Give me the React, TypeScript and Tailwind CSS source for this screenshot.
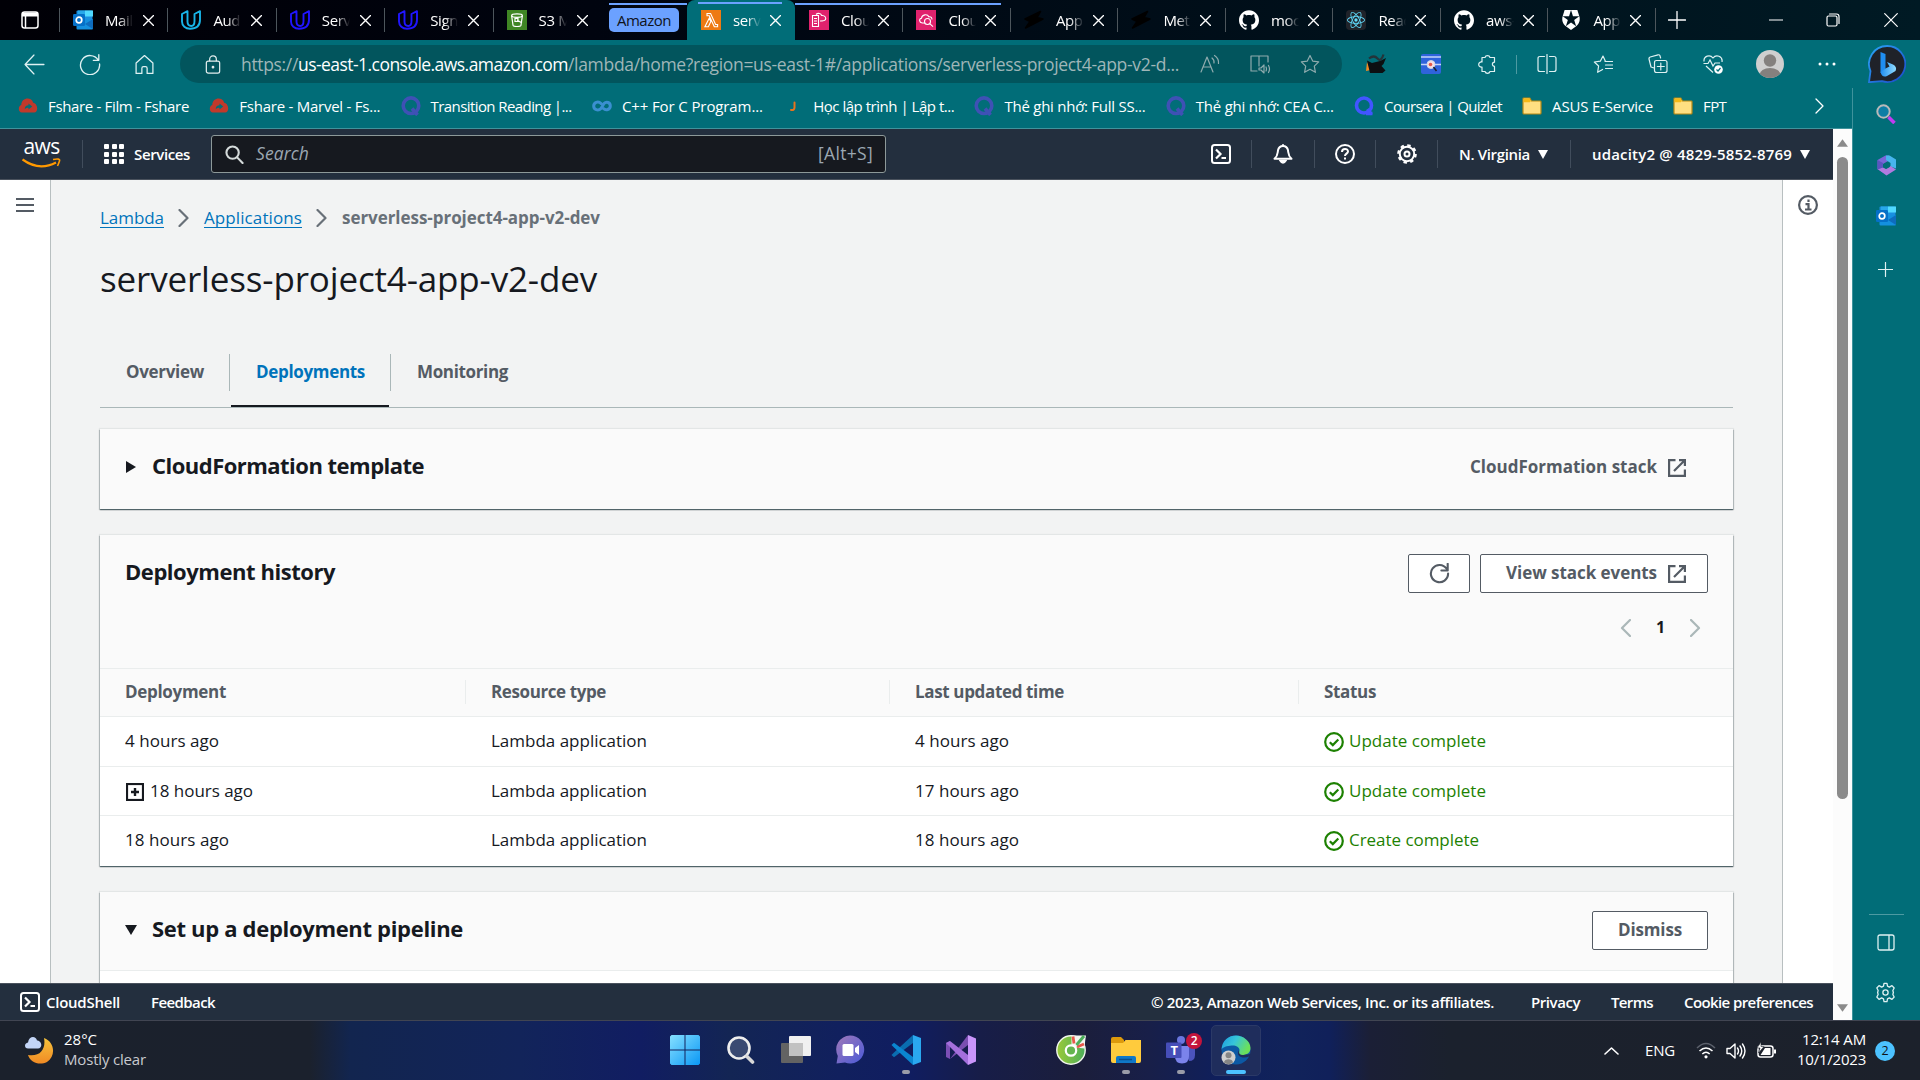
import React, { useLayoutEffect, useRef, useState } from "react";
import { SiGithub, SiReact, SiAuth0 } from "react-icons/si";

type P = { className?: string };

/* Spaces its letters so that the text fills the width given by its class. */
function Fit({ className = "", children }: { className?: string; children: string }) {
  const box = useRef<HTMLSpanElement>(null);
  const inner = useRef<HTMLSpanElement>(null);
  const [spacing, setSpacing] = useState(0);
  useLayoutEffect(() => {
    if (!box.current || !inner.current) return;
    const natural = inner.current.getBoundingClientRect().width;
    const target = box.current.getBoundingClientRect().width;
    setSpacing((target - natural) / children.length);
  }, [children]);
  return (
    <span ref={box} className={"inline-block shrink-0 whitespace-nowrap " + className}>
      <span ref={inner} style={{ letterSpacing: spacing + "px" }}>
        {children}
      </span>
    </span>
  );
}

/* ---------- icons ---------- */

const Line = ({ className = "", d, w = 1.2, vb = "0 0 20 20" }: { className?: string; d: string; w?: number; vb?: string }) => (
  <svg viewBox={vb} className={"shrink-0 " + className} fill="none" stroke="currentColor" strokeWidth={w} strokeLinecap="round" strokeLinejoin="round">
    <path d={d} />
  </svg>
);

const Udacity = ({ className = "" }: P) => (
  <Line
    className={"h-5 w-5 " + className}
    w={1.9}
    d="M6.500 1.200L1 4v7.500c0 4.500 3.500 7.300 8 7.300 6 0 10-3 10-9V1.200L13.500 4v7c0 3.200-1 5-3.200 5-2.500 0-3.800-1.600-3.800-4.500z"
  />
);

const Outlook = ({ className = "" }: P) => (
  <svg viewBox="0 0 20 20" className={"shrink-0 " + className}>
    <rect x="3.500" y="0.500" width="16" height="11" rx="1" fill="#1a8fe0" />
    <rect x="12" y="0.500" width="8" height="6" fill="#50d9ff" />
    <rect x="5" y="0.500" width="7" height="6" fill="#28a8ea" />
    <path d="M3.500 9H20v9.500a1 1 0 0 1-1 1H4.500a1 1 0 0 1-1-1z" fill="#1490df" />
    <path d="M20 9l-8 5 8 5z" fill="#0a4fa0" opacity=".55" />
    <rect x="0" y="4" width="12" height="12" rx="1.200" fill="#0570c8" />
    <circle cx="6" cy="10" r="2.800" fill="none" stroke="#fff" strokeWidth="1.700" />
  </svg>
);

const Bucket = ({ className = "" }: P) => (
  <svg viewBox="0 0 20 20" className={"shrink-0 " + className}>
    <rect width="20" height="20" fill="#3f8624" />
    <g fill="none" stroke="#fff" strokeWidth="1.200">
      <ellipse cx="10" cy="5.600" rx="5.400" ry="1.800" />
      <path d="M4.600 5.600L6 15.200c.6 1.700 7.400 1.700 8 0l1.400-9.600M8 8.500h3v3H8zM10 10l5 3" />
    </g>
  </svg>
);

const LambdaIcon = ({ className = "" }: P) => (
  <svg viewBox="0 0 20 20" className={"shrink-0 " + className}>
    <rect width="20" height="20" fill="#ee7a12" />
    <path d="M6 3.500h3.600l5 11h2v2.300h-3.300L8.300 5.800H6zM8.200 8.300l1.600 3.200-2.400 5.300H3.900z" fill="none" stroke="#fff" strokeWidth="1.100" />
  </svg>
);

const CloudPink = ({ className = "", search = false }: { className?: string; search?: boolean }) => (
  <svg viewBox="0 0 20 20" className={"shrink-0 " + className}>
    <rect width="20" height="20" fill="#e0226d" />
    <g fill="none" stroke="#fff" strokeWidth="1.100">
      {search ? (
        <>
          <path d="M9 13H6.200C3 12.600 2.800 8.700 5.500 8.200 6 4.300 11.500 3.600 12.800 6.800 15 6.300 16.200 8 15.800 9.500" />
          <circle cx="11.500" cy="11.500" r="3" />
          <path d="M13.700 13.700l3.300 3" />
        </>
      ) : (
        <>
          <path d="M3.500 5.500h6v11h-6zM5 8.500h3M5 11h3M5 13.500h3" />
          <path d="M7 4.500c2-2 5-1.200 5.600 1C16 5 17.300 8 16.500 9.500c-.7 1.500-3.500 1.500-5.500 1.500" />
        </>
      )}
    </g>
  </svg>
);

const Bolt = ({ className = "" }: P) => (
  <svg viewBox="0 0 20 20" className={"shrink-0 " + className} fill="#000" stroke="#000" strokeWidth="1.500" strokeLinejoin="round">
    <path d="M16.500 1.500L1 9l5 2.500L1.500 18 19 9l-6-1.500z" />
  </svg>
);

const QuizletQ = ({ className = "" }: P) => (
  <svg viewBox="0 0 20 20" className={"shrink-0 " + className} fill="none" stroke="currentColor" strokeWidth="3.600">
    <circle cx="10" cy="9.700" r="7.800" />
    <path d="M11 12.500l5.500 6.500" />
  </svg>
);

const QuizletNew = ({ className = "" }: P) => (
  <svg viewBox="0 0 20 20" className={"shrink-0 " + className} fill="none" stroke="#4255ff" strokeWidth="3.600">
    <circle cx="10" cy="9.500" r="7.500" />
    <path d="M12 17.500h6.500M13.500 13l4 5.500" />
  </svg>
);

const Fshare = ({ className = "" }: P) => (
  <svg viewBox="0 0 20 16" className={"shrink-0 " + className}>
    <path d="M3.500 15.500C-.5 15.500-1 8.500 2.800 7.500 3 -1 14-1.500 15.500 5c5 .5 6 10.500 1 10.500z" fill="#c0392b" />
    <path d="M6.500 12c0-3 1.500-4.200 4-4.200V5.800l4 3.300-4 3.200v-2C9 10.300 8 10.600 6.500 12z" fill="#026e78" />
  </svg>
);

const Folder = ({ className = "" }: P) => (
  <svg viewBox="0 0 20 18" className={"shrink-0 " + className}>
    <path d="M1 1.800Q1 1 1.800 1h6l1.700 3H18.200q.8 0 .8.800V16q0 1-.8 1H1.800Q1 17 1 16z" fill="#ffdf81" stroke="#b88a14" strokeWidth="1.200" />
    <path d="M1.600 1.600h6l1.200 2.600-1 1H1.600z" fill="#f5b915" />
  </svg>
);

const Shell = ({ className = "" }: P) => (
  <svg viewBox="0 0 20 20" className={"shrink-0 " + className} fill="none" stroke="#fff" strokeWidth="2">
    <rect x="1" y="1" width="18" height="18" rx="2.500" />
    <path d="M5 5.500l4.500 4.500L5 14.500M10.500 14h4.500" strokeWidth="2.200" />
  </svg>
);

const Gear = ({ className = "", w = 1.2 }: { className?: string; w?: number }) => (
  <svg viewBox="0 0 24 24" className={"shrink-0 " + className} fill="none" stroke="currentColor" strokeWidth={w} strokeLinejoin="round">
    <path d="M10.300 1.500h3.400l.6 3.300 2.100 1 3-1.700 2.500 2.700-1.500 3 .6 2.200-.6 2.200 1.500 3-2.500 2.700-3-1.700-2.100 1-.6 3.300h-3.400l-.6-3.300-2.100-1-3 1.700-2.500-2.700 1.500-3-.6-2.200.6-2.200-1.500-3 2.500-2.700 3 1.700 2.100-1z" />
    <circle cx="12" cy="12" r="3" />
  </svg>
);

const AwsGear = ({ className = "" }: P) => (
  <svg viewBox="0 0 20 20" className={"shrink-0 " + className} fill="none" stroke="#fff">
    <circle cx="10" cy="10" r="8.600" strokeWidth="2.400" strokeDasharray="3.400 3.350" />
    <circle cx="10" cy="10" r="7.200" strokeWidth="2" />
    <circle cx="10" cy="10" r="2.500" strokeWidth="2" />
  </svg>
);

const External = ({ className = "" }: P) => (
  <svg viewBox="0 0 18 18" className={"shrink-0 " + className} fill="none" stroke="#545b64" strokeWidth="2.200">
    <path d="M7.500 1.100H1.100v15.800h15.800V10.500" />
    <path d="M11 1.100h5.900V7M16.500 1.500L6 12" />
  </svg>
);

const Check = ({ className = "" }: P) => (
  <svg viewBox="0 0 20 20" className={"shrink-0 " + className} fill="none" stroke="#1d8102" strokeWidth="2.200">
    <circle cx="10" cy="10" r="8.800" />
    <path d="M5.800 10.200l3 2.900 5.500-5.600" />
  </svg>
);

const Bing = ({ className = "" }: P) => (
  <svg viewBox="0 0 38 38" className={"shrink-0 " + className}>
    <defs>
      <linearGradient id="bingRing" x1="0" y1="0" x2="1" y2="1">
        <stop offset="0" stopColor="#2aa5f5" />
        <stop offset="1" stopColor="#1b49c9" />
      </linearGradient>
      <linearGradient id="bingB" x1="0" y1="0" x2="1" y2="0">
        <stop offset="0" stopColor="#1f8df0" />
        <stop offset="1" stopColor="#8fdcff" />
      </linearGradient>
    </defs>
    <path d="M19 1a18 18 0 1 1-5 35.200L1 37.200l1.500-11A18 18 0 0 1 19 1z" fill="#1f2229" stroke="url(#bingRing)" strokeWidth="1.800" />
    <path d="M12.500 7l5 2v15l-5 4z" fill="#1f8df0" />
    <path d="M12.500 27l5-3.500 4-2-2.500-4.500 6 2.500q4.500 2.500 2.500 6.500L19 31q-5 2-6.500-4z" fill="url(#bingB)" />
  </svg>
);

const M365 = ({ className = "" }: P) => (
  <svg viewBox="0 0 20 21" className={"shrink-0 " + className}>
    <path d="M9 .5L1 5v9l5.500 3.500V9l6-3.500V.5z" fill="#7a66d8" />
    <path d="M9.500 .5H13L19.500 4.500v9l-5.500-2V8L9.500 5z" fill="#47b5ee" />
    <path d="M1 14l9 6.500 9.500-6-5.500-3.500-4.500 3-3-1.500z" fill="#b07be0" />
    <path d="M1 5v9.500l5.500-2V8z" fill="#5a55c0" />
    <path d="M10 7.500l3.300 1.700v2.800L10 13.800l-3-1.500V9z" fill="#016d78" />
  </svg>
);

/* ---------- browser chrome ---------- */

function Tab({ icon, label, wide, sep = true }: { icon: React.ReactNode; label: string; wide?: boolean; sep?: boolean }) {
  return (
    <div className={"flex h-10 shrink-0 items-center " + (wide ? "w-[108.400px]" : "w-[107.500px]")}>
      <div className={"h-6 w-px " + (sep ? "bg-[#4d565c]" : "")} />
      <div className="ml-[13px] flex w-5 justify-center">{icon}</div>
      <div className="ml-3 h-5 w-7 overflow-hidden whitespace-nowrap text-[15px] leading-5 tracking-tight text-white [mask-image:linear-gradient(to_right,black_50%,transparent)]">
        {label}
      </div>
      <Line className={"h-[11px] w-[11px] text-white " + (wide ? "ml-2.5" : "ml-[9px]")} vb="0 0 11 11" d="M0.500 0.500l10 10M10.500 0.500l-10 10" w={1.4} />
    </div>
  );
}

function TabStrip() {
  return (
    <div className="relative flex h-10 items-center bg-linear-to-r from-[#000006] via-[#000a15] to-[#001a24] text-white">
      <div className="flex w-[59px] shrink-0 pl-[21px]">
        <svg viewBox="0 0 18 18" className="h-[18px] w-[18px]" fill="none" stroke="#fff" strokeWidth="1.500">
          <rect x="1" y="1" width="16" height="16" rx="2.500" />
          <path d="M1 3.500h16" strokeWidth="4" />
          <path d="M4.500 4v13" />
        </svg>
      </div>
      <Tab wide icon={<Outlook className="h-5 w-5" />} label="Mail" />
      <Tab wide icon={<Udacity className="text-[#18b4e8]" />} label="Aud" />
      <Tab wide icon={<Udacity className="text-[#2015ff]" />} label="Serv" />
      <Tab wide icon={<Udacity className="text-[#2015ff]" />} label="Sign" />
      <Tab wide icon={<Bucket className="h-5 w-5" />} label="S3 M" />
      <div className="ml-2 flex h-6 w-[70px] shrink-0 items-center justify-center rounded-[5px] bg-[#6ba1ff]">
        <Fit className="w-[54px] text-[15px] leading-5 text-[#10131a]">Amazon</Fit>
      </div>
      <div className="ml-2 flex h-10 w-[108px] shrink-0 items-center rounded-t-lg bg-[#016d78]">
        <Tab sep={false} icon={<LambdaIcon className="h-5 w-5" />} label="serv" />
      </div>
      <Tab sep={false} icon={<CloudPink className="h-5 w-5" />} label="Clou" />
      <Tab icon={<CloudPink search className="h-5 w-5" />} label="Clou" />
      <Tab icon={<Bolt className="h-5 w-5" />} label="App" />
      <Tab icon={<Bolt className="h-5 w-5" />} label="Met" />
      <Tab icon={<SiGithub className="h-5 w-5" />} label="moc" />
      <Tab
        icon={
          <span className="flex h-5 w-5 items-center justify-center rounded-sm bg-[#20232a]">
            <SiReact className="h-[18px] w-[18px] text-[#61dafb]" />
          </span>
        }
        label="Reac"
      />
      <Tab icon={<SiGithub className="h-5 w-5" />} label="aws-" />
      <Tab icon={<SiAuth0 className="h-5 w-5" />} label="App" />
      <div className="h-6 w-px bg-[#4d565c]" />
      <Line className="ml-3 h-[18px] w-[18px]" vb="0 0 18 18" d="M9 .5v17M.5 9h17" w={1.3} />
      <div className="ml-auto flex w-[151px] shrink-0 items-center">
        <Line className="h-[14px] w-[14px]" vb="0 0 14 14" d="M.5 7h13" />
        <Line className="ml-[43px] h-[14px] w-[14px]" vb="0 0 14 14" d="M1 4.500q0-1.500 1.500-1.500h7q1.500 0 1.500 1.500v7q0 1.500-1.500 1.500h-7Q1 13 1 11.500zM3.500 1h7q2.500 0 2.500 2.500v7" />
        <Line className="ml-[44px] h-[14px] w-[14px]" vb="0 0 14 14" d="M.7.700l12.600 12.600M13.300.700L.700 13.300" />
      </div>
      <div className="absolute left-[609px] top-[3px] h-0.5 w-[78px] bg-[#6ba1ff]" />
      <div className="absolute left-[698px] top-0.5 h-0.5 w-[84px] bg-[#6ba1ff]" />
      <div className="absolute left-[795px] top-[3px] h-0.5 w-[206px] bg-[#6ba1ff]" />
    </div>
  );
}

function Toolbar() {
  return (
    <div className="flex h-[45px] items-center pt-[3px] text-[#dff1f2]">
      <Line className="ml-[24px] h-[21px] w-[21px]" d="M9.500 1L1 10l8.500 9M1 10h18" />
      <Line className="ml-[34px] h-[22px] w-[22px]" d="M17.500 6.500A8.700 8.700 0 1 0 18.700 10M18 1.500v5.200h-5" />
      <Line className="ml-[33px] h-[21px] w-[21px]" d="M2 8.500L10 1.500l8 7v10h-5.500v-5q0-1.500-1.500-1.500H9q-1.500 0-1.500 1.500v5H2z" />
      <div className="ml-[25px] flex h-[38px] w-[1162px] shrink-0 items-center rounded-full bg-[#02555d]">
        <svg viewBox="0 0 16 20" className="ml-[25px] h-[19px] w-4 text-[#e3eeee]" fill="none" stroke="currentColor" strokeWidth="1.300">
          <rect x="1" y="6.500" width="14" height="12.500" rx="2" />
          <path d="M4.500 6.500V4.500a3.500 3.500 0 0 1 7 0v2" />
          <circle cx="8" cy="12.800" r=".8" fill="currentColor" />
        </svg>
        <div className="ml-[20px] flex text-[17.500px] leading-6 text-[#9fb6b8]">
          <Fit className="w-[57px]">https://</Fit>
          <Fit className="w-[270px] text-white">us-east-1.console.aws.amazon.com</Fit>
          <Fit className="w-[611px]">/lambda/home?region=us-east-1#/applications/serverless-project4-app-v2-d...</Fit>
        </div>
        <Line className="ml-[21px] h-5 w-5 text-[#8fabae]" d="M1 18L7 3l6 15M3 13h8M12 4q2.500 2 2 5M14.500 1.500q4.500 3 4 8" />
        <Line className="ml-[29px] h-5 w-[22px] text-[#8fabae]" vb="0 0 22 20" d="M10 2H2v15h6M10 2v10M10 2h9v6M10 14h2l3-3v8l-3-3h-2zM17 13q1 2 0 4M19.500 11.500q2 3.500 0 7" />
        <Line className="ml-[29px] h-5 w-5 text-[#8fabae]" d="M10 1.500l2.700 5.600 6 .8-4.400 4.200 1.100 6.200L10 15.300l-5.400 3 1.100-6.200L1.300 7.900l6-.8z" />
      </div>
      <svg viewBox="0 0 20 20" className="ml-6 h-5 w-5 shrink-0">
        <path d="M1 8l-1 9 5-1z" fill="#f08a24" />
        <path d="M1 6.500l5 2.500 8-2 6-3-2.500 6-2 2 4 4.500-3 2.500H4z" fill="#0c0f12" />
        <path d="M3 4.500q5-4 8.500 0t6-4" stroke="#24343a" strokeWidth="2.200" fill="none" />
      </svg>
      <svg viewBox="0 0 20 20" className="ml-[35px] h-5 w-5 shrink-0">
        <rect width="20" height="20" rx="2" fill="#2f63dc" />
        <path d="M0 3h20M0 10.500h20" stroke="#c4d4fa" strokeWidth="1.300" />
        <circle cx="10" cy="10.500" r="4" fill="#f5dfe4" stroke="#cfd6e8" />
        <circle cx="9.500" cy="10.500" r="1.800" fill="#e4564a" />
        <path d="M12.500 13l3 4" stroke="#1b2230" strokeWidth="1.600" />
      </svg>
      <Line className="ml-9 h-5 w-5" d="M5 3.500h3a2.600 2.600 0 0 1 5 0h4.500v4.700a2.100 2.100 0 0 0 0 4.200V17.500H13a2.600 2.600 0 0 1-5 0H5V13a2.600 2.600 0 1 1 0-5z" />
      <div className="ml-[19px] h-[19px] w-px bg-[#4d9aa2]" />
      <Line className="ml-[20px] h-5 w-5" d="M7.500 2.500H3Q1 2.500 1 4.500v11q0 2 2 2h4.500M12.500 2.500H17q2 0 2 2v11q0 2-2 2h-4.500M10 .5v19" />
      <Line className="ml-[36px] h-5 w-5" d="M12.500 7.500L10 2 7.300 7.200l-6 .8 4.300 4-1 6.300 5-2.800M12 7.500h7.500M12.500 11h7M12.500 14.500h7" />
      <Line className="ml-[35px] h-5 w-5" d="M6 14L3 13 1 5Q.7 3.500 2.200 3L10 .8q1.500-.3 2 1l.6 2.200M8.500 6.500h8.500q2 0 2 2v8q0 2-2 2H8.500q-2 0-2-2v-8q0-2 2-2zM12.800 9v7M9.300 12.500h7" />
      <svg viewBox="0 0 20 20" className="ml-[35px] h-5 w-5 shrink-0" fill="none" stroke="currentColor" strokeWidth="1.200">
        <path d="M1 7.500C.5 2 7 0 10 4c3-4 10-2 9 4M.5 9.500h4.500l2-3.500 3 6 2-3h5M3 12l7 6.500" />
        <circle cx="15.500" cy="15.500" r="4.300" fill="#fff" stroke="none" />
        <path d="M13.500 15.500l1.500 1.500 2.500-3" stroke="#016d78" />
      </svg>
      <svg viewBox="0 0 28 28" className="ml-[33px] h-7 w-7 shrink-0">
        <defs>
          <clipPath id="avatar">
            <circle cx="14" cy="14" r="14" />
          </clipPath>
        </defs>
        <g clipPath="url(#avatar)">
          <rect width="28" height="28" fill="#cfcfcf" />
          <circle cx="14" cy="10.500" r="6.200" fill="#84807e" />
          <ellipse cx="14" cy="25" rx="10.500" ry="7" fill="#84807e" />
        </g>
      </svg>
      <svg viewBox="0 0 18 4" className="ml-[34px] h-1 w-[18px] shrink-0" fill="#fff">
        <circle cx="2" cy="2" r="1.500" />
        <circle cx="9" cy="2" r="1.500" />
        <circle cx="16" cy="2" r="1.500" />
      </svg>
    </div>
  );
}

function Bookmark({ icon, children }: { icon: React.ReactNode; children: React.ReactNode }) {
  return (
    <div className="flex w-[191.300px] shrink-0 items-center">
      <div className="mr-2.5 flex w-5 justify-center">{icon}</div>
      {children}
    </div>
  );
}

function Bookmarks() {
  return (
    <div className="flex h-[43px] items-center border-b border-[#3f939c] pb-[3px] pl-[18px] text-[15px] leading-5 text-white">
      <Bookmark icon={<Fshare className="h-[15px] w-5" />}><Fit className="w-[141px]">Fshare - Film - Fshare</Fit></Bookmark>
      <Bookmark icon={<Fshare className="h-[15px] w-5" />}><Fit className="w-[141px]">Fshare - Marvel - Fs...</Fit></Bookmark>
      <Bookmark icon={<QuizletQ className="h-5 w-5 text-[#3f51b5]" />}><Fit className="w-[141px]">Transition Reading |...</Fit></Bookmark>
      <Bookmark icon={<Line className="h-5 w-5 text-[#3a8fd0]" w={3} d="M9 7.500C6 4.500 1.700 6.500 1.700 10S6 15.500 9 12.500L12 7.500C14.500 5 18.300 6.500 18.300 10s-4.500 5-6.800 2.500" />}><Fit className="w-[141px]">C++ For C Program...</Fit></Bookmark>
      <Bookmark icon={<Line className="h-5 w-5 text-[#e8731c]" w={2} d="M11.500 6.500v5q0 3-3.500 2.500" />}><Fit className="w-[141px]">Học lập trình | Lập t...</Fit></Bookmark>
      <Bookmark icon={<QuizletQ className="h-5 w-5 text-[#3f51b5]" />}><Fit className="w-[141px]">Thẻ ghi nhớ: Full SS...</Fit></Bookmark>
      <Bookmark icon={<QuizletQ className="h-5 w-5 text-[#3f51b5]" />}><Fit className="w-[138px]">Thẻ ghi nhớ: CEA C...</Fit></Bookmark>
      <QuizletNew className="-ml-[3px] mr-2.5 h-5 w-5" />
      <Fit className="w-[118px]">Coursera | Quizlet</Fit>
      <Folder className="ml-5 mr-2.5 h-[18px] w-5" />
      <Fit className="w-[101px]">ASUS E-Service</Fit>
      <Folder className="ml-5 mr-2.5 h-[18px] w-5" />
      <Fit className="w-[23px]">FPT</Fit>
      <Line className="ml-auto mr-7 h-4 w-[9px]" vb="0 0 9 16" d="M1 1l7 7-7 7" w={1.3} />
    </div>
  );
}

/* ---------- AWS console ---------- */

const Divider = () => <div className="h-7 w-px shrink-0 bg-[#414d5c]" />;

const Caret = ({ className = "" }: P) => (
  <svg viewBox="0 0 10 9" className={"h-[9px] w-[10px] shrink-0 " + className} fill="#fff">
    <path d="M0 0h10L5 9z" />
  </svg>
);

function AwsHeader() {
  return (
    <div className="flex h-[51px] shrink-0 items-center border-b border-[#4a525d] bg-[#232f3e] text-[15px] font-semibold text-white">
      <div className="ml-[22px] flex w-[39px] shrink-0 flex-col items-center">
        <Fit className="-mt-px w-[36px] text-[21px] font-medium leading-[15px]">aws</Fit>
        <svg viewBox="0 0 39 11" className="mt-1 h-[11px] w-[39px]" fill="none" stroke="#ff9900" strokeWidth="2.200">
          <path d="M0.500 1.500Q17 13.500 34 4.500" />
          <path d="M31 1.500q7.500-1.500 6.500 1.500t-2 5" strokeWidth="1.600" />
        </svg>
      </div>
      <div className="ml-[21px]"><Divider /></div>
      <div className="ml-[21px] grid h-5 w-5 shrink-0 grid-cols-3 gap-[2.500px]">
        {Array.from({ length: 9 }, (_, i) => (
          <span key={i} className="rounded-[1px] bg-white" />
        ))}
      </div>
      <Fit className="ml-2.5 w-[56px] leading-5">Services</Fit>
      <div className="ml-[21px] flex h-[38px] w-[675px] shrink-0 items-center rounded-[3px] border border-[#8d9999] bg-[#16191f] font-normal text-[#9ba7b2]">
        <Line className="ml-[13px] h-[19px] w-[19px] text-[#d5dbdb]" w={2.2} d="M8 1.500a6.500 6.500 0 1 0 0 13a6.500 6.500 0 1 0 0-13M12.800 13l5.700 6" />
        <Fit className="-mt-0.5 ml-3 w-[53px] text-[17.500px] italic leading-6">Search</Fit>
        <Fit className="-mt-0.5 ml-auto mr-3 w-[55px] text-[17.500px] leading-6">[Alt+S]</Fit>
      </div>
      <Shell className="ml-[325px] h-5 w-5" />
      <div className="ml-5"><Divider /></div>
      <svg viewBox="0 0 20 20" className="ml-[21px] h-5 w-5 shrink-0" fill="none" stroke="#fff" strokeWidth="2">
        <path d="M1.500 14.800c3.500-3 3-5.500 3.500-8.500C5.800 2.800 8 2 10 2s4.200.8 5 4.300c.5 3 0 5.500 3.500 8.500z" strokeLinejoin="round" />
        <path d="M10 0v2M7 16.500q3 5 6 0z" fill="#fff" strokeWidth="1.500" />
      </svg>
      <div className="ml-[21px]"><Divider /></div>
      <svg viewBox="0 0 20 20" className="ml-5 h-5 w-5 shrink-0" fill="none" stroke="#fff" strokeWidth="2">
        <circle cx="10" cy="10" r="9" />
        <path d="M7 8c0-4 6-4 6-.5 0 2-3 2.300-3 4.500M10 13.500v2" />
      </svg>
      <div className="ml-5"><Divider /></div>
      <AwsGear className="ml-[21px] h-5 w-5" />
      <div className="ml-5"><Divider /></div>
      <Fit className="ml-[21px] w-[71px] leading-5">N. Virginia</Fit>
      <Caret className="ml-2" />
      <div className="ml-[22px]"><Divider /></div>
      <Fit className="ml-[21px] w-[200px] leading-5">udacity2 @ 4829-5852-8769</Fit>
      <Caret className="ml-2" />
    </div>
  );
}

const Card = ({ className = "", children }: { className?: string; children: React.ReactNode }) => (
  <section className={"shrink-0 bg-[#fafafa] shadow-[0_0_1px_1px_rgba(0,28,36,0.06),0_1px_1px_0_rgba(0,28,36,0.5),1px_1px_1px_0_rgba(0,28,36,0.15),-1px_1px_1px_0_rgba(0,28,36,0.15)] " + className}>
    {children}
  </section>
);

const Button = ({ className = "", children }: { className?: string; children: React.ReactNode }) => (
  <button className={"flex h-[39px] shrink-0 items-center justify-center rounded-[2px] border border-[#545b64] bg-white text-[17px] font-bold leading-6 text-[#545b64] " + className}>
    {children}
  </button>
);

type Row = { age: React.ReactNode; updated: React.ReactNode; status: React.ReactNode };

const rows: Row[] = [
  {
    age: <Fit className="w-[94px]">4 hours ago</Fit>,
    updated: <Fit className="w-[94px]">4 hours ago</Fit>,
    status: <Fit className="w-[137px]">Update complete</Fit>,
  },
  {
    age: (
      <>
        <svg viewBox="0 0 18 18" className="ml-px mr-1.5 mt-0.5 h-[18px] w-[18px]" fill="none" stroke="#16191f">
          <rect x="1" y="1" width="16" height="16" strokeWidth="2.200" />
          <path d="M9 5v8M5 9h8" strokeWidth="2.400" />
        </svg>
        <Fit className="w-[103px]">18 hours ago</Fit>
      </>
    ),
    updated: <Fit className="w-[104px]">17 hours ago</Fit>,
    status: <Fit className="w-[137px]">Update complete</Fit>,
  },
  {
    age: <Fit className="w-[104px]">18 hours ago</Fit>,
    updated: <Fit className="w-[104px]">18 hours ago</Fit>,
    status: <Fit className="w-[130px]">Create complete</Fit>,
  },
];

const columns = "grid grid-cols-[365px_425px_408px_1fr] items-center pl-[25px]";

function Main() {
  return (
    <div className="flex h-[803px] shrink-0 overflow-hidden">
      <nav className="w-[51px] shrink-0 border-r border-[#b8bfc0] bg-white pl-4 pt-[18px]">
        <div className="flex flex-col gap-1">
          <span className="h-0.5 w-[18px] bg-[#545b64]" />
          <span className="h-0.5 w-[18px] bg-[#545b64]" />
          <span className="h-0.5 w-[18px] bg-[#545b64]" />
        </div>
      </nav>
      <main className="flex w-[1731px] shrink-0 flex-col bg-[#f2f3f3] pl-[49px] pr-[49px] text-[17px] leading-6 text-[#16191f]">
        <div className="mt-[26px] flex h-6 shrink-0 items-center">
          <Fit className="w-16 border-b border-[#0073bb] leading-[19px] text-[#0073bb]">Lambda</Fit>
          <Line className="ml-[14px] h-[18px] w-[11px] text-[#687078]" vb="0 0 11 18" w={2.2} d="M1.500 1l8 8-8 8" />
          <Fit className="ml-[15px] w-[98px] border-b border-[#0073bb] leading-[19px] text-[#0073bb]">Applications</Fit>
          <Line className="ml-[14px] h-[18px] w-[11px] text-[#687078]" vb="0 0 11 18" w={2.2} d="M1.500 1l8 8-8 8" />
          <Fit className="ml-[15px] w-[258px] font-bold text-[#687078]">serverless-project4-app-v2-dev</Fit>
        </div>
        <h1 className="mt-[27px] h-11 shrink-0 text-[35px] leading-[44px]">
          <Fit className="w-[497px]">serverless-project4-app-v2-dev</Fit>
        </h1>
        <div className="mt-[53px] flex h-[54px] shrink-0 border-b border-[#aab7b8] font-bold leading-[35px] text-[#545b64]">
          <Fit className="ml-[26px] w-[78px]">Overview</Fit>
          <div className="ml-[25px] h-[37px] w-px bg-[#aab7b8]" />
          <div className="ml-px flex h-[53px] w-[158px] border-b-2 border-[#16191f] pl-[25px]">
            <Fit className="w-[109px] text-[#0073bb]">Deployments</Fit>
          </div>
          <div className="ml-px h-[37px] w-px bg-[#aab7b8]" />
          <Fit className="ml-[26px] w-[91px]">Monitoring</Fit>
        </div>

        <Card className="mt-[21px] flex h-[80px] items-center pb-[5px] pl-[26px] pr-[47px] font-bold">
          <svg viewBox="0 0 10 12" className="h-3 w-[10px]" fill="#16191f"><path d="M0 0l10 6-10 6z" /></svg>
          <h2 className="-mt-[3px] ml-4 text-[22px]"><Fit className="w-[272px]">CloudFormation template</Fit></h2>
          <Fit className="ml-auto w-[187px] text-[#545b64]">CloudFormation stack</Fit>
          <External className="ml-[11px] mt-0.5 h-[18px] w-[18px]" />
        </Card>

        <Card className="mt-[26px] h-[331px]">
          <div className="flex h-[133px] flex-col pl-[25px] pr-[25px] pt-[19px]">
            <div className="flex items-center">
              <h2 className="-mt-[5px] text-[22px] font-bold"><Fit className="w-[210px]">Deployment history</Fit></h2>
              <Button className="ml-auto w-[62px]">
                <Line className="h-[21px] w-[21px]" w={2} d="M16.800 5.500A8.200 8.200 0 1 0 18.200 10M17.800 0.800v6.400h-6" />
              </Button>
              <Button className="ml-2.5 w-[228px] pl-1">
                <Fit className="-mt-0.5 w-[151px]">View stack events</Fit>
                <External className="ml-[11px] h-[18px] w-[18px]" />
              </Button>
            </div>
            <div className="mt-6 flex items-center justify-end pr-[7px]">
              <Line className="h-[18px] w-[11px] text-[#aab7b8]" vb="0 0 11 18" w={2.2} d="M10 1L2 9l8 8" />
              <span className="-mt-0.5 w-[59px] text-center text-[16px] font-bold">1</span>
              <Line className="h-[18px] w-[11px] text-[#aab7b8]" vb="0 0 11 18" w={2.2} d="M1 1l8 8-8 8" />
            </div>
          </div>
          <div className={"h-[49px] border-y border-[#eaeded] pb-0.5 font-bold text-[#545b64] " + columns}>
            <Fit className="w-[101px]">Deployment</Fit>
            <div className="-ml-[25px] border-l border-[#eaeded] pl-[25px]"><Fit className="w-[115px]">Resource type</Fit></div>
            <div className="-ml-[26px] border-l border-[#eaeded] pl-[25px]"><Fit className="w-[149px]">Last updated time</Fit></div>
            <div className="-ml-[25px] border-l border-[#eaeded] pl-[25px]"><Fit className="w-[52px]">Status</Fit></div>
          </div>
          {rows.map((r, i) => (
            <div key={i} className={"h-[49.500px] border-b border-[#eaeded] bg-white last:h-[50px] last:border-b-0 last:pb-0.5 " + columns}>
              <div className="flex items-center">{r.age}</div>
              <Fit className="ml-px w-[156px]">Lambda application</Fit>
              <div className="flex">{r.updated}</div>
              <div className="flex items-center pl-px text-[#1d8102]">
                <Check className="mr-[5px] mt-0.5 h-5 w-5" />
                {r.status}
              </div>
            </div>
          ))}
        </Card>

        <Card className="mt-[26px] h-[200px]">
          <div className="flex h-[79px] items-center border-b border-[#eaeded] pb-0.5 pl-[25px] pr-[25px]">
            <svg viewBox="0 0 12 10" className="h-[10px] w-[12px]" fill="#16191f"><path d="M0 0h12L6 10z" /></svg>
            <h2 className="-mt-1 ml-[15px] text-[22px] font-bold"><Fit className="w-[311px]">Set up a deployment pipeline</Fit></h2>
            <Button className="ml-auto w-[116px]"><Fit className="w-[64px]">Dismiss</Fit></Button>
          </div>
          <div className="h-[120px] bg-white" />
        </Card>
      </main>
      <aside className="flex-1 border-l border-[#b8bfc0] bg-white pl-[15px] pt-[15px]">
        <svg viewBox="0 0 20 20" className="h-5 w-5" fill="none" stroke="#545b64" strokeWidth="2.200">
          <circle cx="10" cy="10" r="8.900" />
          <path d="M10.500 4.500v2.500M7.500 9.200h3v5M7 14.500h6.500" />
        </svg>
      </aside>
    </div>
  );
}

function Footer() {
  return (
    <div className="flex h-[37px] shrink-0 items-center border-t border-[#4a525d] bg-[#232f3e] text-[15px] font-semibold leading-5 text-white">
      <Shell className="ml-5 h-5 w-5" />
      <Fit className="ml-1.5 w-[74px]">CloudShell</Fit>
      <Fit className="ml-[31px] w-16">Feedback</Fit>
      <Fit className="ml-auto w-[343px]">© 2023, Amazon Web Services, Inc. or its affiliates.</Fit>
      <Fit className="ml-[37px] w-[49px]">Privacy</Fit>
      <Fit className="ml-[31px] w-[42px]">Terms</Fit>
      <Fit className="ml-[31px] mr-5 w-[129px]">Cookie preferences</Fit>
    </div>
  );
}

function Scrollbar() {
  return (
    <div className="flex w-[19px] shrink-0 flex-col items-center bg-[#fcfcfc] pt-2.5">
      <svg viewBox="0 0 12 8" className="h-2 w-[11px]" fill="#8b8b8b"><path d="M6 0l6 8H0z" /></svg>
      <div className="mt-2.5 h-[642px] w-[11px] rounded-full bg-[#8b8b8b]" />
      <svg viewBox="0 0 12 8" className="mb-2 mt-auto h-2 w-[11px]" fill="#8b8b8b"><path d="M6 8l6-8H0z" /></svg>
    </div>
  );
}

function EdgeSidebar() {
  return (
    <div className="flex w-[68px] shrink-0 flex-col items-center text-[#dff1f2]">
      <Bing className="ml-[2px] mt-[5px] h-[38px] w-[38px]" />
      <div className="mt-[5px] flex w-full flex-1 flex-col items-center border-l border-[#3f939c] pr-[2px] pt-[16px]">
        <svg viewBox="0 0 20 20" className="h-5 w-5">
          <path d="M12.500 13l6 6" stroke="#c03cf0" strokeWidth="3.600" />
          <circle cx="7.500" cy="7.500" r="6.200" fill="#0d7ea5" stroke="#b9b9b9" strokeWidth="2" />
        </svg>
        <M365 className="ml-px mt-[31px] h-[21px] w-[21px]" />
        <Outlook className="ml-px mt-[30px] h-5 w-5" />
        <Line className="mt-[36px] h-[15px] w-[15px]" vb="0 0 15 15" d="M7.500 .5v14M.5 7.500h14" w={1.2} />
        <div className="ml-px mt-auto h-px w-[35px] bg-[#4d9aa2]" />
        <Line className="mt-[19px] h-[17px] w-[18px]" vb="0 0 18 17" d="M3 1h12q2 0 2 2v11q0 2-2 2H3q-2 0-2-2V3q0-2 2-2zM12 1v15" w={1.3} />
        <Gear className="mb-[17px] mt-[31px] h-[21px] w-[21px]" w={1.5} />
      </div>
    </div>
  );
}

/* ---------- Windows taskbar ---------- */

function TaskbarApp({ dot, children }: { dot?: boolean; children?: React.ReactNode }) {
  return (
    <div className="flex h-[59px] w-[55.140px] shrink-0 flex-col items-center pt-3.5">
      <div className="h-[31px]">{children}</div>
      {dot && <div className="mt-1 h-1 w-2 rounded-full bg-[#9a9ca8]" />}
    </div>
  );
}

function Taskbar() {
  return (
    <div className="flex h-[60px] items-center border-t border-[#414552] bg-[linear-gradient(to_right,#1b212c_0px,#1b212d_310px,#12254f_350px,#12245a_520px,#111d62_640px,#132554_730px,#11205e_840px,#101d60_910px,#171d48_980px,#1b1e3b_1080px,#181f49_1150px,#0f1f5c_1220px,#11235a_1290px,#10205a_1330px,#1b1f36_1370px,#1b212d_1450px,#1c212b_1920px)] text-[15px] leading-5 text-white">
      <svg viewBox="0 0 30 28" className="-mt-px ml-[24px] h-7 w-[30px] shrink-0">
        <defs>
          <linearGradient id="moon" x1="0" y1="0" x2="0" y2="1">
            <stop offset="0" stopColor="#f6c33c" />
            <stop offset="1" stopColor="#f08a24" />
          </linearGradient>
        </defs>
        <path d="M20 2C31 6 32 20 23 26 15 30 6 26 4 19c13 2 18-7 16-17z" fill="url(#moon)" />
        <path d="M4 12.500C0 12.500 0 7 4 6.500 5-.5 12-.5 13 4.500c5 0 6 8 1 8z" fill="#c3d5f7" />
      </svg>
      <div className="-mt-1 ml-2.5 flex w-[583px] shrink-0 flex-col">
        <Fit className="w-[33px]">28°C</Fit>
        <Fit className="w-[82px] text-[#c9cacf]">Mostly clear</Fit>
      </div>
      <div className="ml-[10.500px] flex">
        <TaskbarApp>
          <svg viewBox="0 0 30 30" className="h-[30px] w-[30px]">
            <defs>
              <linearGradient id="win" gradientUnits="userSpaceOnUse" x1="0" y1="0" x2="30" y2="30">
                <stop offset="0" stopColor="#86e0ff" />
                <stop offset="1" stopColor="#0a97f5" />
              </linearGradient>
            </defs>
            <path d="M1.500 0h13v14.500H0V1.500zM15.500 0h13l1.500 1.500v13H15.500zM0 15.500h14.500V30h-13L0 28.500zM15.500 15.500H30v13L28.500 30h-13z" fill="url(#win)" />
          </svg>
        </TaskbarApp>
        <TaskbarApp>
          <svg viewBox="0 0 28 30" className="ml-px h-[30px] w-7" fill="none">
            <circle cx="12" cy="13" r="10.500" fill="#3a4a72" stroke="#eee" strokeWidth="2.600" />
            <path d="M20 21.500l5.500 5.500" stroke="#d8d8d8" strokeWidth="3.600" strokeLinecap="round" />
          </svg>
        </TaskbarApp>
        <TaskbarApp>
          <svg viewBox="0 0 30 30" className="ml-px h-[30px] w-[30px]">
            <rect x="0" y="8" width="22" height="20" rx="1" fill="#636363" />
            <rect x="8" y="1" width="22" height="20" rx="1" fill="#f0f0f0" />
            <rect x="8" y="8" width="14" height="13" fill="#c2c2c2" />
          </svg>
        </TaskbarApp>
        <TaskbarApp>
          <svg viewBox="0 0 30 30" className="h-[30px] w-[30px]">
            <defs>
              <linearGradient id="chat" x1="0" y1="0" x2="1" y2="1">
                <stop offset="0" stopColor="#a078b8" />
                <stop offset="1" stopColor="#4a5ad8" />
              </linearGradient>
            </defs>
            <path d="M15 .5a14 14 0 1 1-5 27L1.500 28.500 2.800 21A14 14 0 0 1 15 .5z" fill="url(#chat)" />
            <rect x="7.500" y="9" width="11" height="12" rx="1.500" fill="#fff" />
            <path d="M20 13l4-3v10l-4-3z" fill="#fff" />
          </svg>
        </TaskbarApp>
        <TaskbarApp dot>
          <svg viewBox="0 0 30 30" className="h-[30px] w-[30px]">
            <path d="M22 0L3 17.500.5 20 3 22.200 22 8z" fill="#0a6db0" />
            <path d="M22 30L3 12.500.5 10 3 7.800 22 22z" fill="#0a85d0" />
            <path d="M22 0l8 3v24l-8 3z" fill="#2aa8f0" />
          </svg>
        </TaskbarApp>
        <TaskbarApp>
          <svg viewBox="0 0 30 30" className="h-[30px] w-[30px]">
            <path d="M0 8l4-2v18l-4-2z" fill="#7b4fb5" />
            <path d="M4 24L22 0v10L4 24z" fill="#7a4fb0" />
            <path d="M4 6l18 14v10L0 8z" fill="#a46fdc" />
            <path d="M22 0l8 3.500v23L22 30z" fill="#c995fa" />
          </svg>
        </TaskbarApp>
        <TaskbarApp />
        <TaskbarApp>
          <svg viewBox="0 0 30 30" className="ml-px h-[30px] w-[30px]">
            <defs>
              <linearGradient id="coc" x1="0" y1="0" x2="1" y2="0">
                <stop offset="0" stopColor="#9ac93a" />
                <stop offset="1" stopColor="#4caf5a" />
              </linearGradient>
            </defs>
            <circle cx="15" cy="15" r="14.200" fill="url(#coc)" stroke="#f2f7ee" strokeWidth="1.400" />
            <path d="M15.500 0.500H30q-1 5-1.500 13l-9-1-4-2z" fill="#f4f6f0" />
            <path d="M17 1.500l1 7M28 9l-7 3" stroke="#e8584a" strokeWidth="2.800" />
            <path d="M28 1l-7.500 9" stroke="#4caf5a" strokeWidth="3" />
            <circle cx="15" cy="15.500" r="5.200" fill="#64b550" stroke="#fff" strokeWidth="2.200" />
          </svg>
        </TaskbarApp>
        <TaskbarApp dot>
          <svg viewBox="0 0 30 30" className="h-[30px] w-[30px]">
            <path d="M0 4q0-2 2-2h8l3 3v5H0z" fill="#dd9a0c" />
            <path d="M0 8h12l2.500-3H30v21q0 2-2 2H2q-2 0-2-2z" fill="#ffcb3d" />
            <path d="M5 28v-5q0-2 2-2h16q2 0 2 2v5z" fill="#0f78c8" />
            <path d="M8 24.500h13" stroke="#0a4f8c" strokeWidth="1.500" />
          </svg>
        </TaskbarApp>
        <TaskbarApp dot>
          <div className="relative">
            <svg viewBox="0 0 30 30" className="h-[30px] w-[30px]">
              <circle cx="15" cy="5" r="4" fill="#6a76de" />
              <path d="M18 11h11v9q0 6-6 6z" fill="#4b53bc" />
              <path d="M9 11h14v10q0 7.500-7 7.500T9 21z" fill="#7b83eb" />
              <rect x="0" y="7.500" width="15.500" height="15.500" rx="1" fill="#464eb8" />
            </svg>
            <span className="absolute left-0 top-[7px] w-4 text-center text-[13px] font-bold leading-4">T</span>
            <span className="absolute -top-0.5 left-5 flex h-4 w-4 items-center justify-center rounded-full bg-[#c4143c] text-[12px] font-semibold leading-4">2</span>
          </div>
        </TaskbarApp>
        <div className="flex h-[59px] w-[55.140px] justify-center pt-1">
          <div className="flex h-[51px] w-[50px] flex-col items-center rounded-[5px] border border-[#2b3967] bg-[#1f2d5c] pt-[9px]">
            <svg viewBox="0 0 30 30" className="h-[30px] w-[30px]">
              <defs>
                <linearGradient id="edge" x1="0" y1="0" x2="1" y2=".4">
                  <stop offset="0" stopColor="#1c9ade" />
                  <stop offset=".5" stopColor="#36c5da" />
                  <stop offset="1" stopColor="#6be05a" />
                </linearGradient>
              </defs>
              <circle cx="15" cy="15" r="14.500" fill="#0c59a4" />
              <path d="M.5 15C1 5 8 .5 15 .5S29.500 6 29.500 13c0 5-4 7-8 7-5 0-3-2-3-5 0-3-4-5-8-4.500S1 12 .5 15z" fill="url(#edge)" />
              <path d="M18 15c-4 6 4 9.500 10 6.500L30 24V19l-8 1q-5 0-4-5z" fill="#1f2d5c" />
              <circle cx="7.500" cy="22.500" r="7" fill="#cfcfcf" />
              <circle cx="7.500" cy="20.300" r="3" fill="#858585" />
              <path d="M3 27.500c0-4.500 9-4.500 9 0q-4.500 3.500-9 0z" fill="#858585" />
            </svg>
            <div className="mt-[5px] h-1 w-5 rounded-full bg-[#4cc2ff]" />
          </div>
        </div>
      </div>
      <Line className="ml-auto h-2 w-[15px]" vb="0 0 15 8" d="M1 7l6.500-6L14 7" w={1.6} />
      <Fit className="-mt-0.5 ml-[26px] w-[30px]">ENG</Fit>
      <svg viewBox="0 0 20 18" className="ml-[21px] h-[18px] w-5 shrink-0" fill="none" stroke="#fff" strokeWidth="1.500">
        <path d="M1 6q9-9 18 0" stroke="#5b606b" />
        <path d="M3.500 9q6.500-6 13 0M6.300 12q3.700-3.500 7.400 0" />
        <circle cx="10" cy="14.800" r="1.600" fill="#fff" stroke="none" />
      </svg>
      <Line className="ml-2.5 h-[18px] w-5" vb="0 0 20 18" w={1.4} d="M1 6.500h3L9 2v14l-5-4.500H1zM11.500 6q2 3 0 6M14 4q3.500 5 0 10M16.500 2q5 7 0 14" />
      <svg viewBox="0 0 20 18" className="ml-2.5 h-[18px] w-5 shrink-0">
        <rect x="2" y="4" width="15" height="11" rx="2.500" fill="none" stroke="#fff" strokeWidth="1.500" />
        <path d="M18 7.500h2v4h-2zM9 6h5.500v7H4.500z" fill="#fff" />
        <path d="M5 0L1 6h3L2.500 11 8 4.500H5z" fill="#fff" stroke="#1c212b" strokeWidth=".6" />
      </svg>
      <div className="-mt-1 ml-[21px] flex w-[69px] shrink-0 flex-col items-end">
        <Fit className="w-[64px]">12:14 AM</Fit>
        <Fit className="w-[69px]">10/1/2023</Fit>
      </div>
      <span className="ml-[9px] mr-[25px] flex h-5 w-5 shrink-0 items-center justify-center rounded-full bg-[#4cc2ff] text-[12.500px] text-[#10131a]">2</span>
    </div>
  );
}

export default function App() {
  return (
    <div className="flex h-[1080px] w-[1920px] flex-col overflow-hidden bg-white font-['Open_Sans','Noto_Sans',sans-serif]">
      <TabStrip />
      <div className="flex h-[980px] bg-[#016d78]">
        <div className="flex w-[1852px] shrink-0 flex-col">
          <Toolbar />
          <div className="h-px" />
          <Bookmarks />
          <div className="flex h-[891px] bg-white">
            <div className="flex w-[1833px] shrink-0 flex-col">
              <AwsHeader />
              <Main />
              <Footer />
            </div>
            <Scrollbar />
          </div>
        </div>
        <EdgeSidebar />
      </div>
      <Taskbar />
    </div>
  );
}
